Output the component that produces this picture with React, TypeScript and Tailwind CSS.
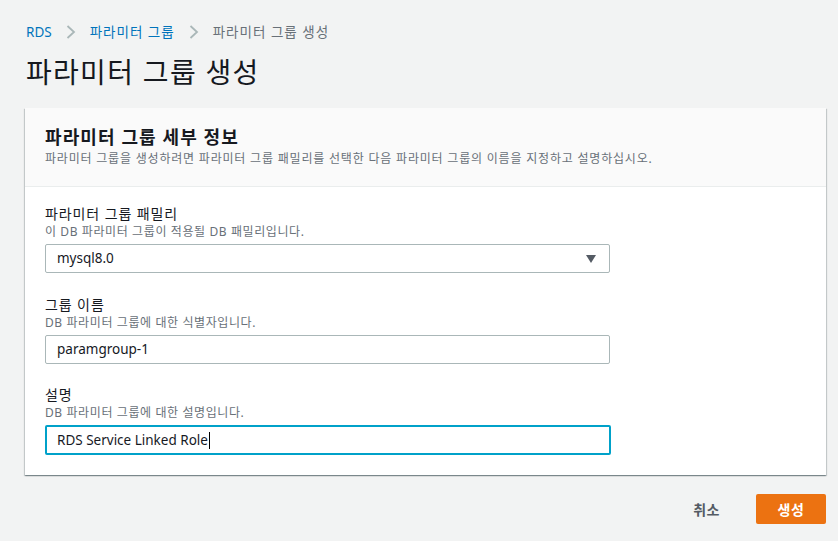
const font = { fontFamily: '"Noto Sans", "Noto Sans CJK KR", sans-serif' };

function Chevron() {
  return (
    <svg width="10" height="14" viewBox="0 0 10 14" className="mx-[14px] text-[#aab7b8]">
      <polyline points="1.5,1 8,7 1.5,13" fill="none" stroke="currentColor" strokeWidth="1.8" />
    </svg>
  );
}

function Field({
  label,
  hint,
  children,
  className = "",
}: {
  label: string;
  hint: string;
  children: React.ReactNode;
  className?: string;
}) {
  return (
    <div className={className}>
      <div className="text-[14px] leading-[20px] tracking-[0.9px] text-[#16191f]">{label}</div>
      <div className="text-[12px] leading-[16px] tracking-[0.6px] text-[#687078]">{hint}</div>
      {children}
    </div>
  );
}

export default function App() {
  return (
    <div
      className="min-h-[541px] w-[838px] bg-[#f2f3f3] px-[25px] pt-[22px] text-[#16191f]"
      style={font}
    >
      <nav className="flex h-[20px] items-center pl-[1px] text-[13.5px] leading-[20px]">
        <span className="text-[#0073bb]">RDS</span>
        <Chevron />
        <span className="tracking-[1px] text-[#0073bb]">파라미터 그룹</span>
        <Chevron />
        <span className="tracking-[1px] text-[#687078]">파라미터 그룹 생성</span>
      </nav>

      <h1 className="mt-[12px] pl-[1px] text-[28px] leading-[36px] font-normal tracking-[1.3px]">
        파라미터 그룹 생성
      </h1>

      <div className="mt-[18px] w-[801px] bg-white shadow-[0_1px_1px_0_rgba(0,28,36,0.3),1px_1px_1px_0_rgba(0,28,36,0.15),-1px_1px_1px_0_rgba(0,28,36,0.15)]">
        <div className="border-b border-[#eaeded] bg-[#fafafa] px-[20px] pt-[16px] pb-[19px]">
          <h2 className="text-[18px] leading-[26px] font-bold tracking-[1.1px]">파라미터 그룹 세부 정보</h2>
          <p className="mt-[1px] text-[12px] leading-[16px] tracking-[0.8px] text-[#687078]">
            파라미터 그룹을 생성하려면 파라미터 그룹 패밀리를 선택한 다음 파라미터 그룹의 이름을 지정하고 설명하십시오.
          </p>
        </div>

        <div className="px-[20px] pt-[17px] pb-[20px]">
          <Field label="파라미터 그룹 패밀리" hint="이 DB 파라미터 그룹이 적용될 DB 패밀리입니다.">
            <div className="mt-[4px] flex h-[29px] w-[565px] items-center justify-between rounded-[2px] border border-[#aab7b8] pr-[13px] pl-[11px] text-[13.5px]">
              <span>mysql8.0</span>
              <svg width="10" height="8" viewBox="0 0 10 8" className="text-[#545b64]">
                <path d="M0 0 L10 0 L5 8 Z" fill="currentColor" />
              </svg>
            </div>
          </Field>

          <Field className="mt-[22px]" label="그룹 이름" hint="DB 파라미터 그룹에 대한 식별자입니다.">
            <div className="mt-[4px] flex h-[29px] w-[565px] items-center rounded-[2px] border border-[#aab7b8] pl-[11px] text-[13.5px]">
              paramgroup-1
            </div>
          </Field>

          <Field className="mt-[21px]" label="설명" hint="DB 파라미터 그룹에 대한 설명입니다.">
            <div className="mt-[4px] flex h-[30px] w-[566px] items-center rounded-[2px] border-2 border-[#00a1c9] pl-[10px] text-[13.5px]">
              RDS Service Linked Role
              <span className="ml-[1px] inline-block h-[17px] w-[1px] bg-black" />
            </div>
          </Field>
        </div>
      </div>

      <div className="mt-[19px] flex w-[801px] items-center justify-end">
        <button className="mr-[36px] text-[14px] font-bold tracking-[0.5px] text-[#545b64]">취소</button>
        <button className="h-[30px] w-[70px] rounded-[2px] bg-[#ec7211] text-[14px] font-bold tracking-[0.5px] text-white">
          생성
        </button>
      </div>
    </div>
  );
}
